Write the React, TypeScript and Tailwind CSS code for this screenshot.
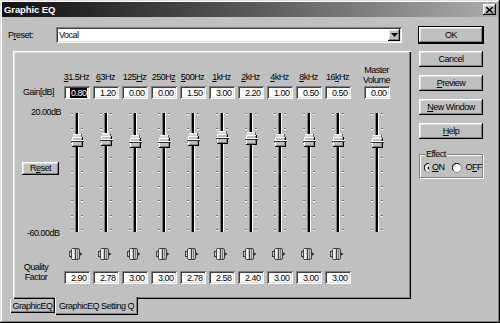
import React from "react";

const raised =
  "bg-[#c0c0c0] shadow-[inset_-1px_-1px_#000,inset_1px_1px_#fff,inset_-2px_-2px_#808080,inset_2px_2px_#dfdfdf]";
const sunken =
  "bg-white shadow-[inset_1px_1px_#808080,inset_-1px_-1px_#fff,inset_2px_2px_#404040,inset_-2px_-2px_#dfdfdf]";

const bands = [
  { label: <><u>3</u>1.5Hz</>, gain: 0.8, q: "2.90" },
  { label: <><u>6</u>3Hz</>, gain: 1.2, q: "2.78" },
  { label: <>125<u>H</u>z</>, gain: 0, q: "3.00" },
  { label: <>250H<u>z</u></>, gain: 0, q: "3.00" },
  { label: <><u>5</u>00Hz</>, gain: 1.5, q: "2.78" },
  { label: <><u>1</u>kHz</>, gain: 3, q: "2.58" },
  { label: <><u>2</u>kHz</>, gain: 2.2, q: "2.40" },
  { label: <><u>4</u>kHz</>, gain: 1, q: "3.00" },
  { label: <><u>8</u>kHz</>, gain: 0.5, q: "3.00" },
  { label: <>16<u>k</u>Hz</>, gain: 0.5, q: "3.00" },
];

function Field({ value, selected }: { value: string; selected?: boolean }) {
  return (
    <div className={`${sunken} w-[26px] h-[13px] flex items-center justify-end pr-[3px] leading-[10px]`}>
      {selected ? <span className="bg-black text-white pl-[1px]">{value}</span> : value}
    </div>
  );
}

function Slider({ gain }: { gain: number }) {
  const c = Math.round(5 + ((20 - gain) / 80) * 116);
  const ticks = Array.from({ length: 9 }, (_, i) => Math.round(5 + i * 14.5));
  return (
    <svg width="29" height="128" className="block">
      {ticks.map((t) => (
        <g key={t}>
          <rect x="9" y={t} width="2" height="1" fill="#707070" />
          <rect x="9" y={t + 1} width="2" height="1" fill="#fff" />
          <rect x="19" y={t} width="2" height="1" fill="#707070" />
          <rect x="19" y={t + 1} width="2" height="1" fill="#fff" />
        </g>
      ))}
      <rect x="13" y="5" width="1" height="119" fill="#808080" />
      <rect x="14" y="5" width="2" height="119" fill="#000" />
      <rect x="16" y="5" width="1" height="119" fill="#fff" />
      <rect x="11" y={c - 7} width="9" height="3" fill="#d8d8d8" />
      <rect x="11" y={c - 7} width="9" height="1" fill="#fff" />
      <rect x="19" y={c - 7} width="1" height="3" fill="#606060" />
      <rect x="10" y={c - 4} width="11" height="10" fill="#c0c0c0" />
      <rect x="10" y={c - 4} width="11" height="1" fill="#fff" />
      <rect x="10" y={c - 4} width="1" height="10" fill="#fff" />
      <rect x="20" y={c - 4} width="1" height="10" fill="#000" />
      <rect x="19" y={c - 3} width="1" height="8" fill="#808080" />
      <rect x="10" y={c + 5} width="11" height="1" fill="#000" />
      <rect x="11" y={c + 4} width="9" height="1" fill="#808080" />
      <rect x="9" y={c - 1} width="13" height="1" fill="#fff" />
      <rect x="9" y={c} width="13" height="1" fill="#303030" />
    </svg>
  );
}

function Knob() {
  return (
    <svg width="14" height="12" className="block">
      <rect x="0.5" y="3.5" width="2" height="5" fill="#d0d0d0" stroke="#404040" />
      <rect x="2.5" y="0.5" width="8" height="11" rx="1.5" fill="#c8c8c8" stroke="#404040" />
      <rect x="3" y="1" width="2" height="10" fill="#eee" />
      <line x1="6.5" y1="1" x2="6.5" y2="11" stroke="#404040" />
      <line x1="8.5" y1="1" x2="8.5" y2="11" stroke="#808080" />
      <path d="M10.5 4 L13.5 6 L10.5 8 Z" fill="#303030" />
    </svg>
  );
}

function Radio({ on }: { on?: boolean }) {
  return (
    <svg width="10" height="10" className="block">
      <circle cx="5" cy="5" r="4.5" fill="#fff" stroke="#808080" />
      <path d="M1.5 7.5 A4 4 0 0 1 7.5 1.5" fill="none" stroke="#000" />
      {on && <circle cx="5" cy="5" r="1.6" fill="#000" />}
    </svg>
  );
}

function Btn({ children, def }: { children: React.ReactNode; def?: boolean }) {
  return (
    <div className={`${raised} h-[16px] flex items-center justify-center whitespace-nowrap ${def ? "outline outline-1 outline-black" : ""}`}>
      {children}
    </div>
  );
}

export default function App() {
  return (
    <div className="w-[500px] h-[323px] bg-[#c0c0c0] p-[2px] overflow-hidden text-black text-[9px] tracking-[-0.5px] leading-[13px] font-['Liberation_Sans',Arial,sans-serif] shadow-[inset_-1px_-1px_#000,inset_1px_1px_#dfdfdf,inset_-2px_-2px_#808080,inset_2px_2px_#fff]">
      <div className="h-[15px] flex items-center justify-between bg-linear-to-r from-[#121212] to-[#acacac] pl-[2px] pr-[2px]">
        <span className="font-bold text-white text-[9.5px] tracking-[-0.1px]">Graphic EQ</span>
        <div className={`${raised} w-[13px] h-[11px] flex items-center justify-center`}>
          <svg width="7" height="6">
            <path d="M0 0 L7 6 M7 0 L0 6" stroke="#000" strokeWidth="1.5" />
          </svg>
        </div>
      </div>

      <div className="flex pt-[10px] pl-[6px]">
        <div className="w-[403px] flex flex-col">
          <div className="flex items-center h-[16px]">
            <span className="w-[48px]">
              P<u>r</u>eset:
            </span>
            <div className={`${sunken} w-[346px] h-[16px] flex items-center justify-between pl-[3px] pr-[2px]`}>
              <span>Vocal</span>
              <div className={`${raised} w-[12px] h-[12px] flex items-center justify-center`}>
                <svg width="7" height="4">
                  <path d="M0 0 L7 0 L3.5 4 Z" fill="#000" />
                </svg>
              </div>
            </div>
          </div>

          <div className="mt-[8px] ml-[5px] w-[398px] h-[248px] p-[2px] shadow-[inset_1px_1px_#fff,inset_-1px_-1px_#000,inset_-2px_-2px_#808080,inset_2px_2px_#dfdfdf]">
            <div className="flex mt-[11px] h-[20px]">
              <div className="w-[47px]" />
              {bands.map((b, i) => (
                <div key={i} className="w-[29px] flex items-end justify-center whitespace-nowrap">
                  <span>{b.label}</span>
                </div>
              ))}
              <div className="w-[10px]" />
              <div className="w-[29px] flex flex-col items-center leading-[9px] pt-[2px] whitespace-nowrap">
                <span>Master</span>
                <span className="mt-[1px]">Volume</span>
              </div>
            </div>

            <div className="flex mt-[2px] h-[13px]">
              <div className="w-[47px] pl-[8px] whitespace-nowrap">Gain[dB]</div>
              {bands.map((b, i) => (
                <div key={i} className="w-[29px] flex justify-center">
                  <Field value={b.gain.toFixed(2)} selected={i === 0} />
                </div>
              ))}
              <div className="w-[10px]" />
              <div className="w-[29px] flex justify-center">
                <Field value="0.00" />
              </div>
            </div>

            <div className="flex mt-[9px] h-[128px]">
              <div className="w-[47px] flex flex-col">
                <span className="-mt-[2px] pl-[16px] whitespace-nowrap">20.00dB</span>
                <div className={`${raised} mt-[43px] ml-[7px] w-[37px] h-[16px] flex items-center justify-center`}>
                  <span>
                    R<u>e</u>set
                  </span>
                </div>
                <span className="mt-[52px] pl-[12px] whitespace-nowrap">-60.00dB</span>
              </div>
              {bands.map((b, i) => (
                <Slider key={i} gain={b.gain} />
              ))}
              <div className="w-[10px]" />
              <Slider gain={0} />
            </div>

            <div className="flex mt-[12px] h-[12px]">
              <div className="w-[47px]" />
              {bands.map((_, i) => (
                <div key={i} className="w-[29px] flex justify-center pr-[1px]">
                  <Knob />
                </div>
              ))}
            </div>

            <div className="flex items-start mt-[11px] h-[13px]">
              <div className="w-[47px] pl-[6px]">
                <div className="w-[30px] -mt-[9px] flex flex-col items-center leading-[10px]">
                  <span>Quality</span>
                  <span>Factor</span>
                </div>
              </div>
              {bands.map((b, i) => (
                <div key={i} className="w-[29px] flex justify-center">
                  <Field value={b.q} />
                </div>
              ))}
            </div>
          </div>

          <div className="flex items-start ml-[2px] whitespace-nowrap">
            <div className="w-[45px] h-[14px] flex items-center justify-center shadow-[inset_1px_0_#fff,inset_-1px_-1px_#000,inset_-2px_-2px_#808080]">
              GraphicEQ
            </div>
            <div className="relative -mt-[2px] w-[83px] h-[18px] bg-[#c0c0c0] flex items-center justify-center pt-[1px] shadow-[inset_1px_0_#fff,inset_-1px_-1px_#000,inset_-2px_-2px_#808080]">
              GraphicEQ Setting Q
            </div>
          </div>
        </div>

        <div className="ml-[8px] w-[64px] flex flex-col">
          <div className="flex flex-col gap-[8px]">
            <Btn def>OK</Btn>
            <Btn>Cancel</Btn>
            <Btn>
              <span>
                <u>P</u>review
              </span>
            </Btn>
            <Btn>
              <span>
                <u>N</u>ew Window
              </span>
            </Btn>
            <Btn>
              <span>
                <u>H</u>elp
              </span>
            </Btn>
          </div>
          <div className="relative mt-[15px] h-[24px] border border-[#808080] shadow-[1px_1px_#fff,inset_1px_1px_#fff]">
            <span className="absolute -top-[7px] left-[5px] bg-[#c0c0c0] px-[1px]">Effect</span>
            <div className="flex items-center pl-[4px] pt-[6px]">
              <Radio on />
              <span className="ml-[3px]">
                <u>O</u>N
              </span>
              <div className="ml-[8px]">
                <Radio />
              </div>
              <span className="ml-[3px]">
                O<u>F</u>F
              </span>
            </div>
          </div>
        </div>
      </div>
    </div>
  );
}
